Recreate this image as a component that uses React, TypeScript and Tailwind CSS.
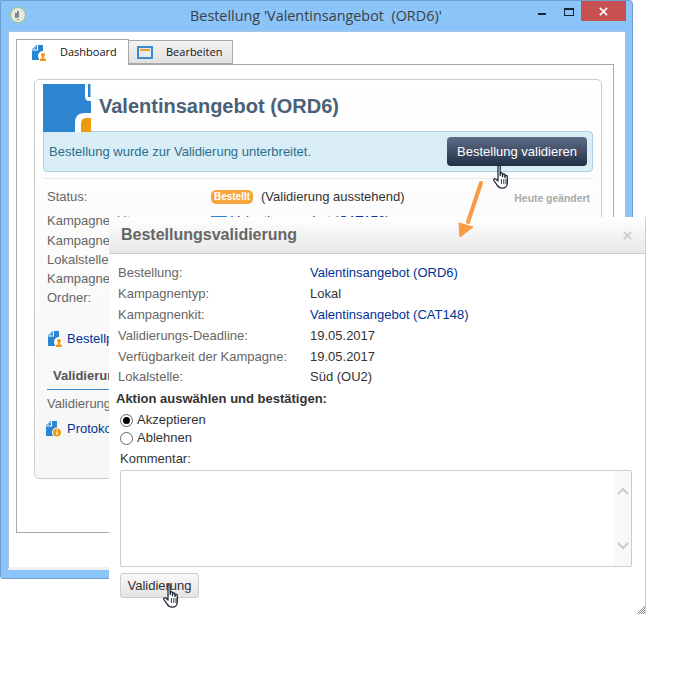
import React from "react";

const sans = "font-['Liberation_Sans',Arial,sans-serif]";

function Hand({ className }: { className: string }) {
  return (
    <svg viewBox="0 0 18 24" className={className}>
      <path
        d="M5 1.6c0-1.2 2.2-1.2 2.2 0V10.5l.3-2c.3-1.1 2-.9 2 .3V11.5l.4-2c.4-1 2-.8 2 .4V12.5l.5-1.6c.4-.9 1.9-.6 1.9.5V18c0 3-2 5.2-5 5.2-2.5 0-4-1-5.2-3L.9 15.5c-.7-1.2.8-2.4 1.9-1.4L5 16z"
        fill="#fff"
        stroke="#1f2a3a"
        strokeWidth="1.3"
        strokeLinejoin="round"
      />
      <path d="M8.4 14v5M10.8 14v5M13 14v5" stroke="#1f2a3a" strokeWidth="0.9" fill="none" />
    </svg>
  );
}

function DocIcon({ badge }: { badge: "person" | "info" }) {
  return (
    <svg viewBox="0 0 16 18" className="w-4 h-[18px] shrink-0">
      <path d="M1 5.5 L5.5 1 L12 1 L12 16 L1 16 Z" fill="#2d84d0" />
      <path d="M1 6.5 L6.5 1 L7 1 L7 6.5 Z" fill="#fff" />
      <path d="M2.5 5.5 L6 2 L6 5.5 Z" fill="#2d84d0" />
      {badge === "person" ? (
        <>
          <circle cx="12" cy="12" r="5" fill="#fff" />
          <rect x="8" y="15" width="8" height="3" fill="#fff" />
          <circle cx="12" cy="11" r="2" fill="#ee9a10" />
          <rect x="11" y="12" width="2" height="3" fill="#ee9a10" />
          <rect x="9" y="14.6" width="6" height="2.4" fill="#ee9a10" />
        </>
      ) : (
        <>
          <circle cx="12" cy="12.5" r="5" fill="#fff" />
          <circle cx="12" cy="12.5" r="4" fill="#ee9a10" />
          <rect x="11.4" y="11.6" width="1.3" height="3.4" fill="#fff" />
          <rect x="11.4" y="9.8" width="1.3" height="1.1" fill="#fff" />
        </>
      )}
    </svg>
  );
}

function BehindRow({ label, value, className }: { label: string; value?: React.ReactNode; className: string }) {
  return (
    <div className={`flex items-center ${className}`}>
      <span className="w-[164px] text-[#666]">{label}</span>
      {value}
    </div>
  );
}

function DetailRow({ label, value, link, className }: { label: string; value: string; link?: boolean; className: string }) {
  return (
    <div className={`flex ${className}`}>
      <span className="w-[192px] text-[#666]">{label}</span>
      <span className={link ? "text-[#003399]" : "text-[#333]"}>{value}</span>
    </div>
  );
}

export default function App() {
  return (
    <div className={`relative w-[682px] h-[695px] overflow-hidden bg-white ${sans}`}>
      {/* window */}
      <div className="w-[633px] h-[579px] flex flex-col bg-[#8ac4f8] border border-[#6d9fd0] rounded-tr-[4px] rounded-b-[3px]">
        <div className="h-[30px] shrink-0 flex items-start relative">
          <div className="ml-[9px] mt-[6px] w-4 h-4 rounded-full bg-[#e8e8e2] border border-[#a0c470] flex items-center justify-center">
            <svg viewBox="0 0 10 10" className="w-[10px] h-[10px]">
              <path d="M5 1V7.5M5 9V10M3 3V8" stroke="#444" strokeWidth="1.2" fill="none" />
            </svg>
          </div>
          <div className="absolute left-[189px] top-[5px] font-['Open_Sans',sans-serif] text-[14.4px] leading-[20px] text-[#3c3f44] whitespace-pre">
            Bestellung 'Valentinsangebot  (ORD6)'
          </div>
          <div className="ml-auto mr-[6px] flex items-start">
            <div className="w-2 h-[2px] bg-[#1a2430] mt-[12px] mr-[18px]" />
            <div className="w-[10px] h-[8px] border border-[#1a2430] border-t-2 mt-[7px] mr-[7px]" />
            <div className="w-[45px] h-[20px] bg-[#c75050] flex items-center justify-center">
              <svg viewBox="0 0 10 10" className="w-[9px] h-[9px]">
                <path d="M1 1L9 9M9 1L1 9" stroke="#fff" strokeWidth="1.8" />
              </svg>
            </div>
          </div>
        </div>

        <div className="mx-[7px] h-[539px] bg-white border border-[#a9c5e0] border-r-0 border-b-[3px] border-b-[#f0f0f0] flex flex-col pt-[7px] px-[7px]">
          {/* tabs */}
          <div className="flex items-end h-[26px] text-[11px] font-['Open_Sans',sans-serif] text-[#111] relative z-10">
            <div className="w-[113px] h-[26px] bg-white border border-[#a8a8a8] border-b-0 flex items-center pl-[14px] gap-[13px]">
              <DocIcon badge="person" />
              <span>Dashboard</span>
            </div>
            <div className="w-[104px] h-[24px] mb-[1px] bg-gradient-to-b from-[#f2f2f2] to-[#e2e2e2] border border-[#a8a8a8] border-l-0 flex items-center pl-[8px] gap-[13px]">
              <div className="w-4 h-[13px] border-2 border-[#3c8bd0] bg-[#e6e9ee] flex flex-col">
                <div className="h-[2px] bg-[#f0a030] mt-[1px] mx-px" />
              </div>
              <span>Bearbeiten</span>
            </div>
          </div>
          <div className="w-[598px] h-[469px] -mt-px border border-[#a8a8a8] pt-[14px] pl-[17px] pr-[11px]">
            {/* card */}
            <div className="h-[400px] rounded-[5px] border border-[#ccc] bg-gradient-to-b from-white to-[#f6f6f6] pt-[4px] px-[8px]">
              <div className="flex items-start h-[47px]">
                <svg viewBox="0 0 48 48" className="w-12 h-12 shrink-0">
                  <rect width="48" height="48" fill="#2d84d0" />
                  <path d="M42 0V12Q42 17 46 17H48V0Z" fill="#fff" />
                  <path d="M45 0H47.5V13H45Z" fill="#2d84d0" />
                  <path d="M48 29H41Q32 29 32 39V48H48Z" fill="#fff" />
                  <path d="M48 34H43Q38 34 38 40V48H48Z" fill="#ee9a10" />
                </svg>
                <h1 className="ml-2 mt-[9px] text-[20px] leading-[26px] font-bold text-[#4a6076]">Valentinsangebot (ORD6)</h1>
              </div>
              <div className="h-[41px] rounded-[4px] border border-[#a9d2e2] bg-[#d8edf5] flex items-center pl-[5px] pr-[5px] justify-between">
                <span className="text-[13px] text-[#2c6d8e]">Bestellung wurde zur Validierung unterbreitet.</span>
                <div className="w-[140px] h-[29px] rounded-[4px] bg-gradient-to-b from-[#5e6c88] to-[#233146] flex items-center justify-center text-[13px] text-white">
                  Bestellung validieren
                </div>
              </div>
              <div className="h-px bg-[#e8e8e8] mt-[6px]" />
              <div className="flex items-center h-[15px] mt-[10px] text-[13px] pl-[4px]">
                <span className="w-[164px] text-[#666]">Status:</span>
                <span className="w-[42px] h-[14px] rounded-[5px] bg-[#f5a53c] text-white font-bold text-[10px] leading-[14px] text-center">Bestellt</span>
                <span className="ml-2 text-[#333]">(Validierung ausstehend)</span>
                <span className="ml-auto mr-[3px] mt-[4px] text-[10.4px] font-bold text-[#aaa]">Heute geändert</span>
              </div>
              <div className="flex flex-col pl-[4px] text-[13px] mt-[7px]">
                <BehindRow
                  className="h-[20px]"
                  label="Kampagnenkit:"
                  value={
                    <span className="flex items-center gap-1 text-[#003399]">
                      <span className="w-4 h-[10px] bg-[#2d84d0]" />
                      Valentinsangebot (CAT178)
                    </span>
                  }
                />
                <BehindRow className="h-[19px]" label="Kampagnentyp:" />
                <BehindRow className="h-[19px]" label="Lokalstelle:" />
                <BehindRow className="h-[19px]" label="Kampagnenbeginn:" />
                <BehindRow className="h-[19px]" label="Ordner:" />
              </div>
              <div className="flex items-center gap-[4px] h-[18px] mt-[23px] pl-[4px] text-[13px] text-[#003399]">
                <DocIcon badge="person" />
                <span>Bestellprotokoll</span>
              </div>
              <div className="mt-[19px] ml-[4px] h-[23px] border-b border-[#3c8bd0] pl-[6px] text-[13px] leading-[18px] font-bold text-[#555]">
                Validierung
              </div>
              <div className="pl-[4px] mt-[6px] text-[13px] leading-[16px] text-[#666]">Validierungen</div>
              <div className="flex items-center gap-[6px] h-[18px] mt-[8px] text-[13px] text-[#003399] -ml-[2px]">
                <span className="ml-[4px] flex"><DocIcon badge="info" /></span>
                <span>Protokoll</span>
              </div>
            </div>
          </div>
        </div>
      </div>

      {/* dialog */}
      <div className="absolute left-[109px] top-[217px] w-[537px] h-[397px] bg-white border-r border-[#ccc] flex flex-col">
        <div className="h-[37px] shrink-0 bg-gradient-to-b from-white to-[#e8e8e8] border-b border-[#ccc] flex items-center pl-3 pr-3 justify-between">
          <h2 className="text-[16px] font-bold text-[#666]">Bestellungsvalidierung</h2>
          <svg viewBox="0 0 10 10" className="w-[9px] h-[9px] mr-[1px]">
            <path d="M1 1L9 9M9 1L1 9" stroke="#ccc" strokeWidth="2" />
          </svg>
        </div>
        <div className="pl-[9px] pt-[8px] text-[13px] flex flex-col relative">
          <DetailRow className="h-[21px] items-center" label="Bestellung:" value="Valentinsangebot (ORD6)" link />
          <DetailRow className="h-[21px] items-center" label="Kampagnentyp:" value="Lokal" />
          <DetailRow className="h-[21px] items-center" label="Kampagnenkit:" value="Valentinsangebot (CAT148)" link />
          <DetailRow className="h-[21px] items-center" label="Validierungs-Deadline:" value="19.05.2017" />
          <DetailRow className="h-[21px] items-center" label="Verfügbarkeit der Kampagne:" value="19.05.2017" />
          <DetailRow className="h-[20px] items-center" label="Lokalstelle:" value="Süd (OU2)" />
        </div>
        <div className="ml-[7px] mt-[4px] text-[13px] leading-[16px] font-bold text-[#333]">Aktion auswählen und bestätigen:</div>
        <div className="ml-[11px] mt-[4px] flex flex-col text-[13px] text-[#333]">
          <label className="flex items-center gap-[4px] h-[18px]">
            <span className="w-[13px] h-[13px] rounded-full border border-[#666] bg-white flex items-center justify-center">
              <span className="w-[7px] h-[7px] rounded-full bg-black" />
            </span>
            Akzeptieren
          </label>
          <label className="flex items-center gap-[4px] h-[18px]">
            <span className="w-[13px] h-[13px] rounded-full border border-[#666] bg-white" />
            Ablehnen
          </label>
        </div>
        <div className="ml-[11px] mt-[4px] text-[13px] leading-[16px] text-[#333]">Kommentar:</div>
        <div className="ml-[11px] mt-[3px] w-[512px] h-[97px] rounded-[2px] border border-[#ccc] flex justify-end">
          <div className="w-[17px] h-full bg-[#f8f8f8] flex flex-col items-center justify-between py-[16px]">
            <svg viewBox="0 0 12 8" className="w-3 h-2">
              <path d="M1 7L6 2L11 7" stroke="#ccc" strokeWidth="2" fill="none" />
            </svg>
            <svg viewBox="0 0 12 8" className="w-3 h-2">
              <path d="M1 1L6 6L11 1" stroke="#ccc" strokeWidth="2" fill="none" />
            </svg>
          </div>
        </div>
        <div className="ml-[11px] mt-[6px] w-[79px] h-[25px] rounded-[3px] border border-[#ccc] bg-gradient-to-b from-[#f8f8f8] to-[#e4e4e4] flex items-center justify-center text-[13px] text-[#333]">
          Validierung
        </div>
        <svg viewBox="0 0 8 8" className="absolute right-0 bottom-0 w-2 h-2">
          <path d="M0 8L8 0M2 8L8 2M4 8L8 4M6 8L8 6" stroke="#555" strokeWidth="0.7" />
        </svg>
      </div>

      {/* arrow */}
      <svg viewBox="0 0 40 70" className="absolute left-[452px] top-[176px] w-10 h-[70px]">
        <path d="M29 7L16 46" stroke="#f99b45" strokeWidth="4" strokeLinecap="round" />
        <path d="M7 47L8 61L21 51Z" fill="#f99b45" stroke="#f99b45" strokeWidth="1" />
      </svg>

      <Hand className="absolute left-[493px] top-[165px] w-[18px] h-6" />
      <Hand className="absolute left-[163px] top-[584px] w-[18px] h-6" />
    </div>
  );
}
